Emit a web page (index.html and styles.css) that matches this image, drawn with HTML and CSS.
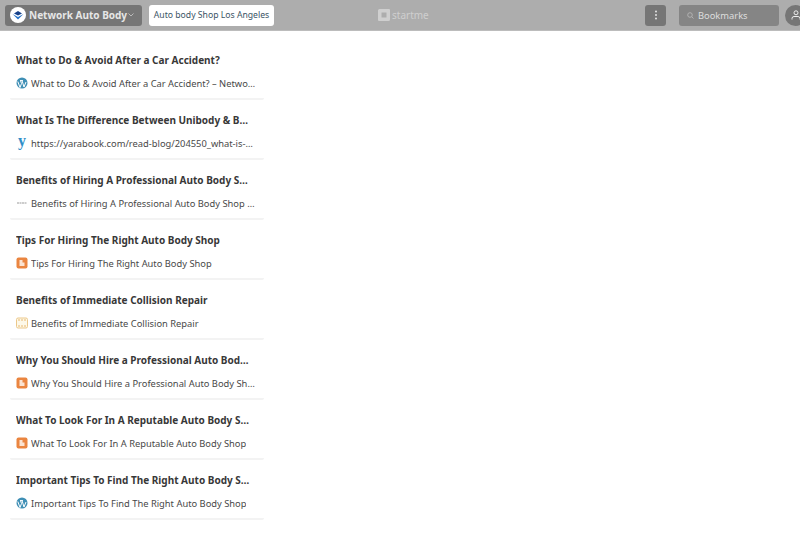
FILE: index.html
```html
<!DOCTYPE html>
<html lang="en">
<head>
    <meta charset="UTF-8">
    <title>Network Auto Body - start.me</title>
    <link rel="stylesheet" href="styles.css">
</head>
<body>

    <!-- Top bar -->
    <header class="topbar">
        <div class="left">
            <div class="group-btn">
                <span class="group-logo">
                    <svg width="16" height="16" viewBox="0 0 16 16">
                        <path d="M8 4 L12 6.500 L8 8.500 L4 6.500 Z" fill="#16408a"/>
                        <path d="M2.500 7 L8 10 L13.500 7 L8 12.500 Z" fill="#2a74c8"/>
                    </svg>
                </span>
                <span class="group-name">Network Auto Body</span>
                <svg class="chev" width="6" height="4" viewBox="0 0 6 4"><path d="M.5 .5 L3 3 L5.500 .5" fill="none" stroke="#ccc" stroke-width=".8"/></svg>
            </div>
            <div class="tab">Auto body Shop Los Angeles</div>
        </div>
        <div class="brand">
            <svg width="12" height="12" viewBox="0 0 12 12"><path d="M1.500 0 H11 Q12 0 12 1 V10.500 Q12 12 10.500 12 H1 Q0 12 0 11 V1.500 Q0 0 1.500 0 Z M3.500 3.500 V8.500 H8.500 V3.500 Z" fill="#cfcfcf" fill-rule="evenodd"/></svg>
            <span>startme</span>
        </div>
        <div class="right">
            <div class="dots-btn">
                <svg width="2" height="10" viewBox="0 0 2 10"><circle cx="1" cy="1.500" r=".9" fill="#eee"/><circle cx="1" cy="5" r=".9" fill="#eee"/><circle cx="1" cy="8.500" r=".9" fill="#eee"/></svg>
            </div>
            <div class="search">
                <svg width="7" height="7" viewBox="0 0 7 7"><circle cx="3" cy="3" r="2.300" fill="none" stroke="#bbb" stroke-width=".8"/><path d="M4.700 4.700 L6.500 6.500" stroke="#bbb" stroke-width=".8"/></svg>
                <span>Bookmarks</span>
            </div>
            <div class="avatar">
                <svg width="10" height="10" viewBox="0 0 10 10"><circle cx="5" cy="2.800" r="2" fill="none" stroke="#eee"/><path d="M1 9.500 V8.500 Q1 6.500 3 6.500 H7 Q9 6.500 9 8.500 V9.500" fill="none" stroke="#eee"/></svg>
            </div>
        </div>
    </header>

    <!-- Bookmark list -->
    <main class="list">
        <div class="card">
            <div class="card-title">What to Do &amp; Avoid After a Car Accident?</div>
            <div class="card-link">
                <svg class="fav" viewBox="0 0 12 12"><circle cx="6" cy="6" r="5.500" fill="#3f8fb5"/><path d="M1.800 4.500 L4 10.500 L5.500 6.500 L4.500 3.600 M4 3.600 H7 M6 3.600 L8 10 L10 5" fill="none" stroke="#fff" stroke-width="1"/></svg>
                <span>What to Do &amp; Avoid After a Car Accident? – Network Auto Body</span>
            </div>
        </div>
        <div class="card">
            <div class="card-title">What Is The Difference Between Unibody &amp; Body On Frame</div>
            <div class="card-link">
                <span class="fav fav-y">y</span>
                <span>https://yarabook.com/read-blog/204550_what-is-the-difference-between-unibody</span>
            </div>
        </div>
        <div class="card">
            <div class="card-title">Benefits of Hiring A Professional Auto Body Shop Services</div>
            <div class="card-link">
                <svg class="fav" viewBox="0 0 12 12"><path d="M1 6 H11" stroke="#999" stroke-width="1" stroke-dasharray="2 .5"/></svg>
                <span>Benefits of Hiring A Professional Auto Body Shop Services Today</span>
            </div>
        </div>
        <div class="card">
            <div class="card-title">Tips For Hiring The Right Auto Body Shop</div>
            <div class="card-link">
                <svg class="fav" viewBox="0 0 12 12"><rect x=".5" y=".5" width="11" height="11" rx="2" fill="#ea8540"/><path d="M3.500 3 H6.500 V5.500 H8.500 V9 H3.500 Z" fill="#fbe3d2"/></svg>
                <span>Tips For Hiring The Right Auto Body Shop</span>
            </div>
        </div>
        <div class="card">
            <div class="card-title">Benefits of Immediate Collision Repair</div>
            <div class="card-link">
                <svg class="fav" viewBox="0 0 12 12"><rect x=".5" y="1" width="11" height="10" rx="1.500" fill="#fdf8e8" stroke="#ecc88a"/><path d="M3 2 V4 M6 2 V4 M9 2 V4 M3 8 V10 M6 8 V10 M9 8 V10" stroke="#e8b870"/></svg>
                <span>Benefits of Immediate Collision Repair</span>
            </div>
        </div>
        <div class="card">
            <div class="card-title">Why You Should Hire a Professional Auto Body Shop Today</div>
            <div class="card-link">
                <svg class="fav" viewBox="0 0 12 12"><rect x=".5" y=".5" width="11" height="11" rx="2" fill="#ea8540"/><path d="M3.500 3 H6.500 V5.500 H8.500 V9 H3.500 Z" fill="#fbe3d2"/></svg>
                <span>Why You Should Hire a Professional Auto Body Shop Today</span>
            </div>
        </div>
        <div class="card">
            <div class="card-title">What To Look For In A Reputable Auto Body Shop Near You</div>
            <div class="card-link">
                <svg class="fav" viewBox="0 0 12 12"><rect x=".5" y=".5" width="11" height="11" rx="2" fill="#ea8540"/><path d="M3.500 3 H6.500 V5.500 H8.500 V9 H3.500 Z" fill="#fbe3d2"/></svg>
                <span>What To Look For In A Reputable Auto Body Shop</span>
            </div>
        </div>
        <div class="card">
            <div class="card-title">Important Tips To Find The Right Auto Body Shop Near You</div>
            <div class="card-link">
                <svg class="fav" viewBox="0 0 12 12"><circle cx="6" cy="6" r="5.500" fill="#3f8fb5"/><path d="M1.800 4.500 L4 10.500 L5.500 6.500 L4.500 3.600 M4 3.600 H7 M6 3.600 L8 10 L10 5" fill="none" stroke="#fff" stroke-width="1"/></svg>
                <span>Important Tips To Find The Right Auto Body Shop</span>
            </div>
        </div>
    </main>

</body>
</html>
```

FILE: styles.css
```css
html, body { margin: 0; height: 100%; overflow: hidden; }
body { font-family: "Noto Sans", sans-serif; background: #fff; color: #333; }

.topbar { height: 31px; box-sizing: border-box; padding: 0 0 0 5px; background: #adadad; border-bottom: 1px solid #bcbcbc; display: flex; align-items: center; }
.left { display: flex; gap: 7px; flex: 0 0 373px; }
.group-btn { width: 137px; height: 21px; box-sizing: border-box; padding-left: 5px; background: #767676; border-radius: 3px; display: flex; align-items: center; gap: 3px; }
.group-logo { width: 16px; height: 16px; background: #fff; border-radius: 50%; display: flex; }
.group-name { font-size: 10px; font-weight: 700; color: #e6e6e6; white-space: nowrap; }
.chev { margin-left: -2px; }
.tab { width: 125px; height: 21px; box-sizing: border-box; background: #fff; border-radius: 3px; font-size: 8.670px; color: #3b5566; line-height: 21px; text-align: center; white-space: nowrap; }

.brand { display: flex; align-items: center; gap: 2px; color: #cfcfcf; font-size: 10px; flex: 0 0 267px; }

.right { display: flex; align-items: center; }
.dots-btn { width: 21px; height: 21px; background: #767676; border-radius: 3px; display: flex; align-items: center; justify-content: center; }
.search { width: 100px; height: 21px; margin-left: 13px; box-sizing: border-box; padding-left: 8px; background: #858585; border-radius: 3px; display: flex; align-items: center; gap: 4px; font-size: 9.330px; color: #dedede; }
.avatar { width: 21px; height: 21px; margin-left: 6px; flex: none; background: #767676; border-radius: 50%; display: flex; align-items: center; justify-content: center; }

.list { width: 254px; margin: 0 0 0 10px; padding-top: 9px; }
.card { height: 60px; box-sizing: border-box; padding: 13px 8px 0 6px; border-bottom: 2px solid #f3f3f3; border-radius: 2px; }
.card-title { font-size: 10px; line-height: 14px; font-weight: 700; color: #383838; margin-right: 6px; white-space: nowrap; overflow: hidden; text-overflow: ellipsis; }
.card-link { margin-top: 9px; height: 14px; display: flex; align-items: center; gap: 3px; font-size: 9.330px; color: #484848; }
.card-link span { white-space: nowrap; overflow: hidden; text-overflow: ellipsis; }
.fav { width: 12px; height: 12px; flex: none; }
.card-link .fav-y { font-family: "Liberation Serif", serif; font-size: 16px; font-weight: 700; line-height: 12px; color: #2f8fc9; text-align: center; overflow: visible; position: relative; top: -2px; }
```
